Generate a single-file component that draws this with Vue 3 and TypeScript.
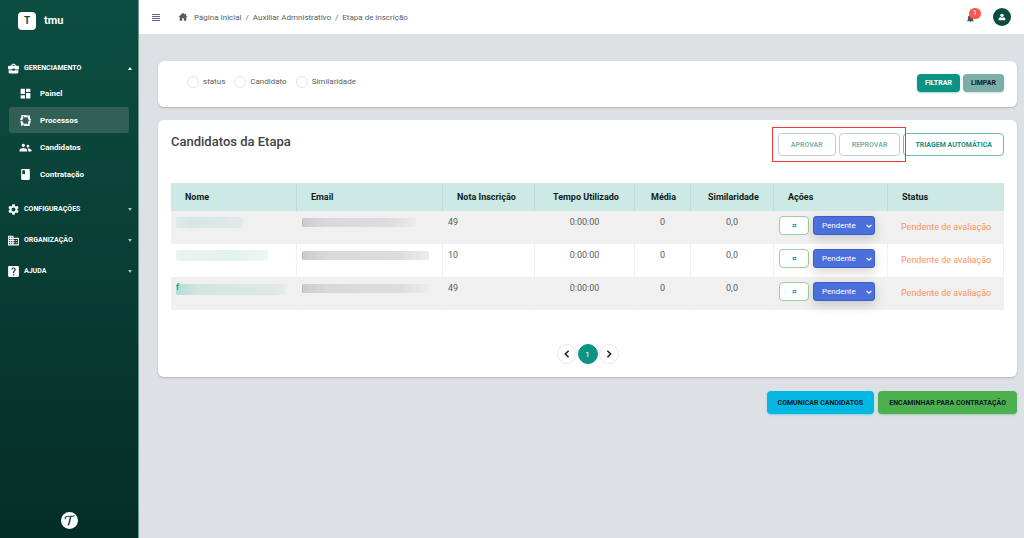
<script setup lang="ts">
import { ref } from 'vue'

interface NavItem {
  label: string
  icon: string
  active?: boolean
}

interface NavGroup {
  label: string
  icon: string
  open: boolean
  items: NavItem[]
}

interface Candidate {
  id: number
  nameWidth: number
  emailWidth: number
  score: string
  time: string
  average: string
  similarity: string
  decision: string
  status: string
}

const icons: Record<string, string> = {
  briefcase:
    'M10 16v-1H3.01L3 19c0 1.110.89 2 2 2h14c1.110 0 2-.89 2-2v-4h-7v1h-4zm10-9h-4.010V5l-2-2h-4l-2 2v2H4c-1.100 0-2 .9-2 2v3c0 1.110.89 2 2 2h6v-2h4v2h6c1.100 0 2-.9 2-2V9c0-1.100-.9-2-2-2zm-6 0h-4V5h4v2z',
  dashboard: 'M3 13h8V3H3v10zm0 8h8v-6H3v6zm10 0h8V11h-8v10zm0-18v6h8V3h-8z',
  people:
    'M16.500 12c1.380 0 2.490-1.120 2.490-2.500S17.880 7 16.500 7 14 8.120 14 9.500s1.120 2.500 2.500 2.500zM8 11c1.660 0 2.990-1.340 2.990-3S9.660 5 8 5 5 6.340 5 8s1.340 3 3 3zm0 2c-2.700 0-7 1.340-7 4v2.500h14V17c0-2.660-4.300-4-7-4zm8.500 1c-.3 0-.7 0-1 .1 1 .9 1.500 1.900 1.500 3.400v2h6V17.500c0-2.300-3.800-3.500-6.500-3.500z',
  book: 'M18 2H6c-1.100 0-2 .9-2 2v16c0 1.100.9 2 2 2h12c1.100 0 2-.9 2-2V4c0-1.100-.9-2-2-2zM6 4h5v8l-2.500-1.500L6 12V4z',
  gear:
    'M19.140 12.940c.04-.3.06-.61.06-.94 0-.32-.02-.64-.07-.94l2.030-1.580c.18-.14.23-.41.12-.61l-1.920-3.320c-.12-.22-.37-.29-.59-.22l-2.390.96c-.5-.38-1.030-.7-1.620-.94l-.36-2.540c-.04-.24-.24-.41-.48-.41h-3.840c-.24 0-.43.17-.47.41l-.36 2.540c-.59.24-1.130.57-1.620.94l-2.390-.96c-.22-.08-.47 0-.59.22L2.740 8.870c-.12.21-.08.47.12.61l2.030 1.580c-.05.3-.09.63-.09.94s.02.64.07.94l-2.030 1.580c-.18.14-.23.41-.12.61l1.920 3.320c.12.22.37.29.59.22l2.390-.96c.5.38 1.030.7 1.620.94l.36 2.540c.05.24.24.41.48.41h3.840c.24 0 .44-.17.47-.41l.36-2.540c.59-.24 1.130-.56 1.620-.94l2.390.96c.22.08.47 0 .59-.22l1.920-3.320c.12-.22.07-.47-.12-.61l-2.010-1.580zM12 15.600c-1.980 0-3.600-1.620-3.600-3.600s1.620-3.600 3.600-3.600 3.600 1.620 3.600 3.600-1.620 3.600-3.600 3.600z',
  building:
    'M12 7V3H2v18h20V7H12zM6 19H4v-2h2v2zm0-4H4v-2h2v2zm0-4H4V9h2v2zm0-4H4V5h2v2zm4 12H8v-2h2v2zm0-4H8v-2h2v2zm0-4H8V9h2v2zm0-4H8V5h2v2zm10 12h-8v-2h2v-2h-2v-2h2v-2h-2V9h8v10zm-2-8h-2v2h2v-2zm0 4h-2v2h2v-2z',
  help:
    'M4 2h16a2 2 0 0 1 2 2v16a2 2 0 0 1-2 2H4a2 2 0 0 1-2-2V4c0-1.100.9-2 2-2zm7 15v2.200h2.200V17H11zm1-12.500c-2.200 0-4 1.700-4 3.900h2.100c0-1.100.8-1.900 1.900-1.900s1.900.8 1.900 1.800c0 1.900-3 2.100-3 5.500v1.200H13v-.8c0-2.500 3.100-2.900 3.100-5.900 0-2.100-1.800-3.800-4.100-3.800z',
}

const groups = ref<NavGroup[]>([
  {
    label: 'GERENCIAMENTO',
    icon: 'briefcase',
    open: true,
    items: [
      { label: 'Painel', icon: 'dashboard' },
      { label: 'Processos', icon: 'cycle', active: true },
      { label: 'Candidatos', icon: 'people' },
      { label: 'Contratação', icon: 'book' },
    ],
  },
  { label: 'CONFIGURAÇÕES', icon: 'gear', open: false, items: [] },
  { label: 'ORGANIZAÇÃO', icon: 'building', open: false, items: [] },
  { label: 'AJUDA', icon: 'help', open: false, items: [] },
])

const filters = ['status', 'Candidato', 'Similaridade']
const filter = ref('')

const columns = [
  'Nome',
  'Email',
  'Nota Inscrição',
  'Tempo Utilizado',
  'Média',
  'Similaridade',
  'Ações',
  'Status',
]

const candidates = ref<Candidate[]>([
  { id: 1, nameWidth: 67, emailWidth: 114, score: '49', time: '0:00:00', average: '0', similarity: '0,0', decision: 'Pendente', status: 'Pendente de avaliação' },
  { id: 2, nameWidth: 92, emailWidth: 127, score: '10', time: '0:00:00', average: '0', similarity: '0,0', decision: 'Pendente', status: 'Pendente de avaliação' },
  { id: 3, nameWidth: 109, emailWidth: 127, score: '49', time: '0:00:00', average: '0', similarity: '0,0', decision: 'Pendente', status: 'Pendente de avaliação' },
])
</script>

<template>
  <div class="app">
    <aside class="sidebar">
      <a class="brand" href="#">
        <span class="brand-mark">T</span>
        <span>tmu</span>
      </a>
      <nav class="nav">
        <div v-for="group in groups" :key="group.label">
          <button class="group-head" type="button" :aria-expanded="group.open" @click="group.open = !group.open">
            <svg class="icon" viewBox="0 0 24 24"><path fill-rule="evenodd" :d="icons[group.icon]" /></svg>
            <span>{{ group.label }}</span>
            <span class="caret" :class="{ up: group.open }"></span>
          </button>
          <ul v-if="group.open && group.items.length" class="items">
            <li v-for="item in group.items" :key="item.label">
              <a class="item" :class="{ active: item.active }" href="#">
                <svg v-if="item.icon === 'cycle'" class="icon" viewBox="0 0 24 24">
                  <circle cx="12" cy="12" r="8" fill="none" stroke="currentColor" stroke-width="4" stroke-dasharray="6.400 1.978" />
                  <path d="M4 2h6L5 8zM20 2v7l-6-5zM20 22h-6l5-6zM4 22v-7l6 5z" />
                </svg>
                <svg v-else class="icon" viewBox="0 0 24 24"><path fill-rule="evenodd" :d="icons[item.icon]" /></svg>
                <span>{{ item.label }}</span>
              </a>
            </li>
          </ul>
        </div>
      </nav>
      <div class="sidebar-foot">
        <svg class="seal" viewBox="0 0 32 32" role="img" aria-label="Logo">
          <circle cx="16" cy="16" r="16" fill="#fff" />
          <g fill="none" stroke="#174c45" stroke-linecap="round">
            <path d="M8 13c-1-4 2-5 6-5s7 1 11-1" stroke-width="2" />
            <path d="M18 9c-1 5-2 11-4 15" stroke-width="3" />
          </g>
        </svg>
      </div>
    </aside>

    <div class="page">
      <header class="topbar">
        <button class="menu" type="button" aria-label="Menu"><i></i><i></i><i></i><i></i></button>
        <nav class="crumbs" aria-label="Navegação">
          <a href="#" class="home" aria-label="Início">
            <svg viewBox="0 0 24 24"><path d="M12 2 1 12h3v9h6v-6h4v6h6v-9h3l-4-4V4h-3v2z" /></svg>
          </a>
          <a href="#">Página Inicial</a><span>/</span>
          <a href="#">Auxiliar Admnistrativo</a><span>/</span>
          <span>Etapa de inscrição</span>
        </nav>
        <button class="bell" type="button" aria-label="Notificações">
          <svg viewBox="0 0 24 24"><path d="M12 22a2 2 0 0 0 2-2h-4c0 1 .9 2 2 2zm7-6v-5c0-3.500-2-6-5-6.700V3h-4v1.300C7 5 5 7.500 5 11v5l-3 3h20z" /></svg>
          <span class="badge">1</span>
        </button>
        <button class="avatar" type="button" aria-label="Perfil">
          <svg viewBox="0 0 24 24"><circle cx="12" cy="7" r="5" /><path d="M2 22v-4c0-3 3-5 6-5 2 2 6 2 8 0 3 0 6 2 6 5v4z" /></svg>
        </button>
      </header>

      <main class="content">
        <form class="card filters" @submit.prevent>
          <div class="options">
            <label v-for="option in filters" :key="option">
              <input v-model="filter" type="radio" name="filter" :value="option" />{{ option }}
            </label>
          </div>
          <button class="btn small primary" type="submit">FILTRAR</button>
          <button class="btn small muted" type="reset">LIMPAR</button>
        </form>

        <section class="card stage">
          <div class="stage-head">
            <h1>Candidatos da Etapa</h1>
            <div class="decisions">
              <button class="btn outline faded" type="button">APROVAR</button>
              <button class="btn outline faded" type="button">REPROVAR</button>
            </div>
            <button class="btn outline" type="button">TRIAGEM AUTOMÁTICA</button>
          </div>

          <table>
            <thead>
              <tr><th v-for="column in columns" :key="column" scope="col">{{ column }}</th></tr>
            </thead>
            <tbody>
              <tr v-for="row in candidates" :key="row.id">
                <td class="name">
                  <span v-if="row.id === 3" class="initial">f</span>
                  <span class="smudge" :style="{ width: row.nameWidth + 'px' }"></span>
                </td>
                <td class="email"><span class="smudge" :style="{ width: row.emailWidth + 'px' }"></span></td>
                <td>{{ row.score }}</td>
                <td class="center">{{ row.time }}</td>
                <td class="center">{{ row.average }}</td>
                <td class="center">{{ row.similarity }}</td>
                <td>
                  <div class="actions">
                    <button class="swap" type="button" aria-label="Mover">
                      <svg viewBox="0 0 24 24"><path d="M2 6h13V2l8 6-8 6v-4H2zM22 18H9v4l-8-6 8-6v4h13z" /></svg>
                    </button>
                    <span class="select">
                      <select v-model="row.decision" aria-label="Decisão">
                        <option>Pendente</option>
                        <option>Aprovado</option>
                        <option>Reprovado</option>
                      </select>
                      <svg viewBox="0 0 10 10"><path d="m1 3 4 4 4-4" /></svg>
                    </span>
                  </div>
                </td>
                <td class="status">{{ row.status }}</td>
              </tr>
            </tbody>
          </table>

          <nav class="pager" aria-label="Paginação">
            <button type="button" aria-label="Anterior"><svg viewBox="0 0 10 10"><path d="M7 1 3 5l4 4" /></svg></button>
            <button type="button" class="current" aria-current="page">1</button>
            <button type="button" aria-label="Próxima"><svg viewBox="0 0 10 10"><path d="m3 1 4 4-4 4" /></svg></button>
          </nav>
        </section>

        <div class="footer-actions">
          <button class="btn info" type="button">COMUNICAR CANDIDATOS</button>
          <button class="btn success" type="button">ENCAMINHAR PARA CONTRATAÇÃO</button>
        </div>
      </main>
    </div>
  </div>
</template>

<style>
body {
  margin: 0;
  background: #dde0e5;
}
</style>

<style scoped>
* {
  box-sizing: border-box;
}

.app {
  display: flex;
  min-height: 100vh;
  font-family: Roboto, "Liberation Sans", sans-serif;
  font-size: 9px;
  color: #57605e;
}

button,
select {
  font-family: inherit;
  cursor: pointer;
}

a {
  color: inherit;
  text-decoration: none;
}

svg {
  display: block;
  fill: currentColor;
}

.sidebar {
  display: flex;
  flex-direction: column;
  flex: 0 0 139px;
  border-right: 1px solid #6f9690;
  background: linear-gradient(#0c4e41, #052d28);
  color: #fff;
}

.brand {
  display: flex;
  align-items: center;
  gap: 8px;
  height: 41px;
  padding-left: 18px;
  font-size: 11px;
  font-weight: 700;
}

.brand-mark {
  display: grid;
  place-items: center;
  width: 18px;
  height: 18px;
  border-radius: 4px;
  background: #fff;
  color: #0c4e41;
  font-size: 10px;
}

.nav {
  display: flex;
  flex-direction: column;
  gap: 7px;
  padding-top: 15px;
}

.icon {
  width: 13px;
  height: 13px;
}

.group-head {
  display: flex;
  align-items: center;
  gap: 4px;
  width: 100%;
  height: 24px;
  padding: 0 6px 0 7px;
  border: 0;
  background: none;
  color: #fff;
  font-size: 7px;
  font-weight: 700;
}

.caret {
  margin-left: auto;
  border: 2px solid transparent;
  border-top: 3px solid #a9c0bb;
  border-bottom-width: 0;
}

.caret.up {
  border-top-width: 0;
  border-bottom: 3px solid #fff;
}

.items {
  display: flex;
  flex-direction: column;
  gap: 1px;
  margin: 0;
  padding: 0 9px 3px;
  list-style: none;
}

.item {
  display: flex;
  align-items: center;
  gap: 8px;
  height: 26px;
  padding-left: 10px;
  border-radius: 3px;
  font-size: 8px;
  font-weight: 700;
}

.item.active {
  background: #315f56;
}

.sidebar-foot {
  display: flex;
  justify-content: center;
  margin-top: auto;
  padding-bottom: 9px;
}

.seal {
  width: 17px;
  height: 17px;
}

.page {
  flex: 1;
  min-width: 0;
}

.topbar {
  display: flex;
  align-items: center;
  height: 34px;
  padding: 0 13px;
  background: #fff;
}

.menu {
  display: grid;
  gap: 1px;
  width: 8px;
  margin-right: 18px;
  padding: 0;
  border: 0;
  background: none;
}

.menu i {
  height: 1px;
  background: #5d668f;
}

.crumbs {
  display: flex;
  align-items: center;
  gap: 4px;
  margin-right: auto;
  font-size: 8px;
}

.home {
  margin-right: 2px;
}

.home svg {
  width: 10px;
  height: 10px;
}

.bell {
  position: relative;
  margin-right: 18px;
  padding: 3px 0 0;
  border: 0;
  background: none;
  color: #555;
}

.bell svg {
  width: 9px;
  height: 9px;
}

.badge {
  position: absolute;
  top: -3px;
  left: 3px;
  width: 12px;
  border-radius: 6px;
  background: #fb5a48;
  color: #fff;
  font-size: 7px;
  line-height: 11px;
}

.avatar {
  display: grid;
  place-items: center;
  width: 18px;
  height: 18px;
  padding: 0;
  border: 0;
  border-radius: 50%;
  background: #0b4c41;
  color: #fff;
}

.avatar svg {
  width: 8px;
  height: 8px;
}

.content {
  padding: 27px 7px 20px 19px;
}

.card {
  border-radius: 6px;
  background: #fff;
  box-shadow: 0 1px 2px #0003;
}

.filters {
  display: flex;
  align-items: center;
  gap: 3px;
  height: 46px;
  padding: 0 13px 2px 29px;
}

.options {
  display: flex;
  gap: 9px;
  margin-right: auto;
  padding-bottom: 3px;
  font-size: 8px;
}

.options label {
  display: flex;
  align-items: center;
  gap: 4px;
}

.options input {
  width: 12px;
  height: 12px;
  margin: 0;
  border: 1px solid #dfe5e5;
  border-radius: 50%;
  appearance: none;
}

.options input:checked {
  border: 3px solid #0b9484;
}

.btn {
  height: 23px;
  padding: 0 11px;
  border: 0;
  border-radius: 4px;
  color: #06201c;
  font-size: 7px;
  font-weight: 700;
  white-space: nowrap;
}

.btn.small {
  height: 18px;
  padding: 0 8px;
}

.btn.primary {
  background: #0b9484;
  color: #fff;
  box-shadow: 0 1px 2px #0b948466;
}

.btn.muted {
  background: #7dada7;
  box-shadow: 0 1px 2px #7dada766;
}

.btn.outline {
  border: 1px solid #6dbcb2;
  background: #fff;
  color: #0b9484;
}

.btn.faded {
  padding: 0 12px;
  border-color: #b8d3cf;
  color: #7db5ae;
}

.stage {
  margin-top: 13px;
  padding: 7px 13px 13px;
}

.stage-head {
  display: flex;
  align-items: center;
  gap: 3px;
  height: 35px;
  margin-bottom: 21px;
}

.stage-head h1 {
  margin: 0 auto 6px 0;
  color: #3b4441;
  font-size: 13px;
  font-weight: 500;
}

.decisions {
  position: relative;
  display: flex;
  gap: 3px;
}

.decisions::after {
  position: absolute;
  inset: -6px;
  z-index: 1;
  border: 1px solid #f33;
  content: "";
  pointer-events: none;
}

table {
  width: 100%;
  border-collapse: separate;
  border-spacing: 0;
  table-layout: fixed;
}

th {
  height: 28px;
  padding: 0 0 0 14px;
  border-right: 1px solid #c0dbd7;
  background: #cce9e4;
  color: #111b19;
  font-size: 9px;
  font-weight: 700;
  text-align: left;
  white-space: nowrap;
}

th:nth-child(1) { width: 126px; }
th:nth-child(2) { width: 146px; }
th:nth-child(3) { width: 92px; }
th:nth-child(4) { width: 100px; padding-left: 18px; }
th:nth-child(5) { width: 56px; padding-left: 16px; }
th:nth-child(6) { width: 83px; padding-left: 17px; }
th:nth-child(7) { width: 114px; }
th:nth-child(8) { width: 116px; border-right: 0; }

td {
  height: 33px;
  padding: 5px 5px 0;
  border-right: 1px solid #f1f1f1;
  font-size: 9px;
  line-height: 13px;
  vertical-align: top;
  white-space: nowrap;
}

tbody tr:nth-child(odd) td {
  background: #f0f0f0;
}

td.center {
  text-align: center;
}

td.status {
  padding: 10px 0 0 13px;
  color: #fc9560;
}

.smudge {
  display: block;
  height: 11px;
  margin-top: 1px;
  border-radius: 2px;
  background: linear-gradient(90deg, #e0e9e8, #d7e6e4 20%, #dce8e6 75%, #e4ebea);
}

tr:nth-child(2) .name .smudge {
  background: linear-gradient(90deg, #e8f4f2, #e2f2ef 60%, #edf7f5);
}

.name {
  position: relative;
}

.initial {
  position: absolute;
  top: 4px;
  left: 5px;
  color: #0b9484;
}

tr:nth-child(3) .name .smudge {
  margin-top: 2px;
  background: linear-gradient(90deg, #9fd8cfcc, #d2e5e2 20%, #dce8e6 85%, #e4ebea);
}

.email .smudge {
  height: 9px;
  margin-top: 2px;
  border-left: 1px solid #cbb7a6;
  background: linear-gradient(90deg, #cdcdcf, #d9d9db 20%, #dcdcde 75%, #ececec);
}

.actions {
  display: flex;
  gap: 4px;
}

.swap {
  display: grid;
  place-items: center;
  width: 30px;
  height: 19px;
  padding: 0;
  border: 1px solid #9bcf9d;
  border-radius: 4px;
  background: #fff;
  color: #0b9484;
}

.swap svg {
  width: 5px;
  height: 5px;
}

.select {
  position: relative;
  border-radius: 3px;
  box-shadow: 0 4px 12px #0000002b;
  color: #fff;
}

.select select {
  display: block;
  width: 62px;
  height: 19px;
  padding: 0 8px;
  border: 1px solid #3c5fc4;
  border-radius: 3px;
  background: #4b70dc;
  color: #fff;
  font-size: 8px;
  appearance: none;
}

.select svg {
  position: absolute;
  top: 7px;
  right: 3px;
  width: 6px;
  height: 6px;
  fill: none;
  stroke: currentColor;
  stroke-width: 2;
  pointer-events: none;
}

.pager {
  display: flex;
  justify-content: center;
  gap: 1px;
  margin-top: 34px;
}

.pager button {
  display: grid;
  place-items: center;
  width: 20px;
  height: 20px;
  padding: 0;
  border: 1px solid #e6e8ea;
  border-radius: 50%;
  background: #fff;
  color: #222;
  font-size: 8px;
}

.pager .current {
  border-color: #0b9484;
  background: #0b9484;
  color: #fff;
}

.pager svg {
  width: 8px;
  height: 8px;
  fill: none;
  stroke: currentColor;
  stroke-width: 2;
}

.footer-actions {
  display: flex;
  justify-content: flex-end;
  gap: 4px;
  margin-top: 14px;
}

.btn.info {
  background: #04b8e2;
  box-shadow: 0 1px 2px #04b8e266;
}

.btn.success {
  background: #4caf50;
  box-shadow: 0 1px 2px #4caf5066;
}
</style>
